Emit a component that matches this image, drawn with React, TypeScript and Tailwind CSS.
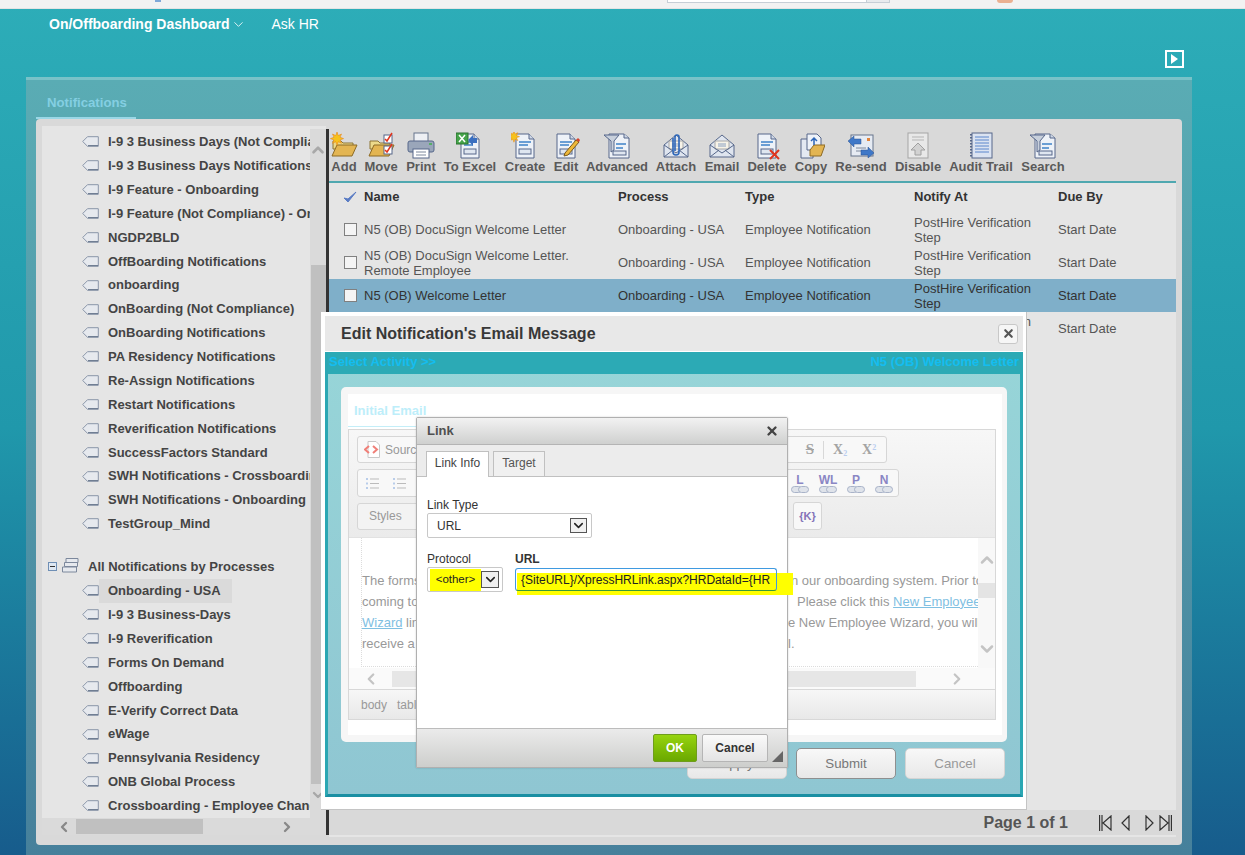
import { ReactNode } from "react";
import { ChevronDown, ChevronLeft, ChevronRight, ChevronUp, X } from "lucide-react";

const notifications = [
  "I-9 3 Business Days (Not Compliance) - Onboarding",
  "I-9 3 Business Days Notifications",
  "I-9 Feature - Onboarding",
  "I-9 Feature (Not Compliance) - Onboarding",
  "NGDP2BLD",
  "OffBoarding Notifications",
  "onboarding",
  "OnBoarding (Not Compliance)",
  "OnBoarding Notifications",
  "PA Residency Notifications",
  "Re-Assign Notifications",
  "Restart Notifications",
  "Reverification Notifications",
  "SuccessFactors Standard",
  "SWH Notifications - Crossboarding",
  "SWH Notifications - Onboarding",
  "TestGroup_Mind",
];

const processes = [
  "Onboarding - USA",
  "I-9 3 Business-Days",
  "I-9 Reverification",
  "Forms On Demand",
  "Offboarding",
  "E-Verify Correct Data",
  "eWage",
  "Pennsylvania Residency",
  "ONB Global Process",
  "Crossboarding - Employee Change",
];

const rows = [
  { name: ["N5 (OB) DocuSign Welcome Letter"], selected: false },
  { name: ["N5 (OB) DocuSign Welcome Letter.", "Remote Employee"], selected: false },
  { name: ["N5 (OB) Welcome Letter"], selected: true },
  { name: [""], selected: false },
];

const Tag = () => (
  <svg width="17" height="11" viewBox="0 0 17 11" className="shrink-0">
    <path d="M.7 5.500 5.500.7h10.800v9.600H5.500z" fill="#e6e9ee" stroke="#8a95a8" />
    <path d="M6 9.600h10" stroke="#66748c" />
  </svg>
);

const Star = () => (
  <path
    d="M7 0l1.300 3.600L11.500 2 10 5.300l3.600 1.300L10 8l1.500 3.300-3.200-1.600L7 13.200 5.700 9.700l-3.200 1.600L4 8 .4 6.600 4 5.300 2.500 2l3.200 1.600z"
    fill="#f6c21c"
    stroke="#e8871e"
    strokeWidth=".6"
  />
);

const Folder = () => (
  <>
    <path d="M3 9h8l2 2h10v6H3z" fill="#ecd98a" stroke="#8d7434" />
    <path d="M2 24 7 13h20l-5 11z" fill="#e3b552" stroke="#8d6a24" />
  </>
);

const Doc = ({ children }: { children?: ReactNode }) => (
  <>
    <path d="M5 2h13l5 5v19H5z" fill="#eef2f8" stroke="#56678a" />
    <path d="M18 2v5h5" fill="#cfd8e6" stroke="#56678a" />
    <path d="M8 10h12M8 13h9" stroke="#3f83c8" strokeWidth="1.300" />
    <rect x="8" y="17" width="12" height="5" fill="#dfe6f0" stroke="#56678a" />
    {children}
  </>
);

const Funnel = () => (
  <>
    <path d="M6 2h15l5 4v20H6z" fill="#eef2f8" stroke="#56678a" />
    <path d="M21 2v4h5" fill="#cfd8e6" stroke="#56678a" />
    <path d="M13 12h10M13 16h7" stroke="#3f83c8" strokeWidth="1.300" />
    <rect x="10" y="19" width="13" height="4" fill="#dfe6f0" stroke="#56678a" />
    <path d="M1 3h15l-5 6v9l-3 2V9z" fill="#c8d0dc" stroke="#56678a" />
  </>
);

const Envelope = ({ children }: { children?: ReactNode }) => (
  <>
    <path d="M2 13 14 3l12 10v12H2z" fill="#dfe5ef" stroke="#56678a" />
    <path d="M7 9h14v8H7z" fill="#f7f3e8" stroke="#a8a8a8" />
    <path d="M10 12h8M10 14h8" stroke="#8aa0c0" />
    <path d="m2 13 12 8 12-8M2 25l9-7M26 25l-9-7" fill="none" stroke="#56678a" />
    {children}
  </>
);

const icons: Record<string, ReactNode> = {
  Add: (
    <>
      <Folder />
      <Star />
    </>
  ),
  Move: (
    <>
      <Folder />
      <rect x="17" y="3" width="8" height="8" fill="#fff" stroke="#56678a" />
      <rect x="17" y="14" width="8" height="8" fill="#fff" stroke="#56678a" />
      <path d="m18 7 2 2 5-8M18 18l2 2 5-8" fill="none" stroke="#e0341e" strokeWidth="1.500" />
    </>
  ),
  Print: (
    <>
      <rect x="7" y="1" width="14" height="9" fill="#eef0f4" stroke="#66748c" />
      <rect x="1" y="9" width="26" height="11" rx="2" fill="#9aa6ba" stroke="#56678a" />
      <rect x="6" y="17" width="16" height="9" fill="#fff" stroke="#56678a" />
      <path d="M9 20h10M9 23h10" stroke="#7c889c" />
      <path d="M22 12h3" stroke="#3fb04a" strokeWidth="1.500" />
    </>
  ),
  "To Excel": (
    <>
      <Doc />
      <rect x="0" y="1" width="12" height="11" fill="#45a349" stroke="#2b7030" />
      <path d="m3 3 6 7M9 3l-6 7" stroke="#fff" strokeWidth="1.500" />
      <path d="m12 8 5-5v3h4v5h-4v3z" fill="#3a6fc0" />
    </>
  ),
  Create: (
    <Doc>
      <g transform="translate(-3 -1) scale(.85)">
        <Star />
      </g>
    </Doc>
  ),
  Edit: (
    <Doc>
      <path d="m13 21 11-13 3 2-11 13-4 1z" fill="#eeb83a" stroke="#7a5a1c" />
      <path d="m24 8 2-2 2 2-1 2z" fill="#d8402a" />
    </Doc>
  ),
  Advanced: <Funnel />,
  Attach: (
    <Envelope>
      <path d="M11 6v14a3 3 0 0 0 6 0V5a2 2 0 0 0-4 0v14" fill="none" stroke="#2d66b8" strokeWidth="1.600" />
    </Envelope>
  ),
  Email: <Envelope />,
  Delete: (
    <Doc>
      <path d="m17 18 9 9M26 18l-9 9" stroke="#e0341e" strokeWidth="2" />
    </Doc>
  ),
  Copy: (
    <>
      <path d="M4 7h12v19H4z" fill="#e4e9f2" stroke="#56678a" />
      <path d="M10 2h10l4 4v12H10z" fill="#eef2f8" stroke="#56678a" />
      <path d="M13 18 17 13h11l-4 11H13z" fill="#e3b552" stroke="#8d6a24" />
      <path d="M17 13V6m-3 3 3-3 3 3" fill="none" stroke="#2d66b8" strokeWidth="1.500" />
    </>
  ),
  "Re-send": (
    <>
      <rect x="4" y="3" width="22" height="21" fill="#e6ebf3" stroke="#66748c" />
      <path d="M9 16h10M9 19h8" stroke="#7c889c" />
      <rect x="20" y="6" width="3" height="3" fill="#e2843a" />
      <path d="M1 9 7 4v3h7v5H7v3z" fill="#3f78c8" stroke="#2a5290" strokeWidth=".5" />
      <path d="m27 21-6 5v-3h-7v-5h7v-3z" fill="#3f78c8" stroke="#2a5290" strokeWidth=".5" />
    </>
  ),
  Disable: (
    <>
      <rect x="4" y="1" width="20" height="25" fill="#e8e8e8" stroke="#a5a5a5" />
      <path d="M8 5h12M8 8h12" stroke="#b5b5b5" />
      <path d="M14 11l7 7h-4v5h-6v-5H7z" fill="#d2d2d2" stroke="#a0a0a0" />
    </>
  ),
  "Audit Trail": (
    <>
      <rect x="5" y="1" width="20" height="25" fill="#dbe3f1" stroke="#56678a" />
      <path d="M8 5h14M8 8h14M8 11h14M8 14h14M8 17h14M8 20h14" stroke="#5a86cc" />
      <path d="M4 2v23" stroke="#56678a" strokeWidth="2" strokeDasharray="1.500 1.500" />
    </>
  ),
  Search: <Funnel />,
};

const tools = [
  { label: "Add", w: "w-[30px]" },
  { label: "Move", w: "w-[44px]" },
  { label: "Print", w: "w-[36px]" },
  { label: "To Excel", w: "w-[62px]" },
  { label: "Create", w: "w-[48px]" },
  { label: "Edit", w: "w-[34px]" },
  { label: "Advanced", w: "w-[68px]" },
  { label: "Attach", w: "w-[50px]" },
  { label: "Email", w: "w-[42px]" },
  { label: "Delete", w: "w-[48px]" },
  { label: "Copy", w: "w-[40px]" },
  { label: "Re-send", w: "w-[60px]" },
  { label: "Disable", w: "w-[54px]" },
  { label: "Audit Trail", w: "w-[72px]" },
  { label: "Search", w: "w-[52px]" },
];

const SmallChevron = () => <ChevronDown size={15} strokeWidth={2.5} className="text-[#222]" />;

const Chain = () => (
  <svg width="18" height="7" viewBox="0 0 18 7">
    <rect x=".5" y=".5" width="10" height="6" rx="3" fill="#dfe3ea" stroke="#a9b3c8" />
    <rect x="7.500" y=".5" width="10" height="6" rx="3" fill="#dfe3ea" stroke="#a9b3c8" />
  </svg>
);

const LinkBtn = ({ label }: { label: string }) => (
  <div className="flex w-[28px] flex-col items-center">
    <span className="text-[12px] leading-[12px] font-bold text-[#8a86c4]">{label}</span>
    <Chain />
  </div>
);

const ListIcon = () => (
  <svg width="14" height="13" viewBox="0 0 14 13">
    <path d="M5 2h9M5 6.500h9M5 11h9" stroke="#bbb" />
    <path d="M1 1h2v2H1zM1 5.500h2v2H1zM1 10h2v2H1z" fill="#b9cdea" />
  </svg>
);

const EditorLine = ({ left, children }: { left: ReactNode; children: ReactNode }) => (
  <div className="flex h-[21px] items-center overflow-hidden whitespace-nowrap">
    <div className="w-[426px] shrink-0">{left}</div>
    {children}
  </div>
);

const EditDialog = () => (
  <div className="absolute top-[312px] left-[321px] h-[498px] w-[706px] border-r border-b border-[#c4c4c4] bg-white pt-[4px] pr-[3px] pl-[4px]">
    <div className="flex h-[35px] items-center justify-between bg-[#e8e8e8] pr-[5px] pl-[16px]">
      <span className="text-[16px] font-bold text-[#383838]">Edit Notification's Email Message</span>
      <div className="flex h-[20px] w-[20px] items-center justify-center rounded-[3px] border border-[#c8c8c8] bg-[#f6f6f6]">
        <X size={13} strokeWidth={4} className="text-[#555]" />
      </div>
    </div>
    <div className="mt-px h-[445px] border-x-[3px] border-b-[3px] border-x-[#2ba7b3] border-b-[#1a8fa3] bg-gradient-to-b from-[#97d5d8] to-[#8fc6d2]">
      <div className="flex h-[22px] items-start justify-between bg-[#2caab5] pr-[1px] pl-[1px] text-[13px] leading-[20px] font-bold text-[#14bdf0]">
        <span>Select Activity &gt;&gt;</span>
        <span>N5 (OB) Welcome Letter</span>
      </div>
      <div className="pt-[13px] pr-[13px] pl-[13px]">
        <div className="h-[355px] w-[666px] rounded-[5px] bg-[#f6f6f6] p-[7px]">
          <div className="h-[341px] w-[654px] bg-white">
            <div className="h-[35px] pt-[8px]">
              <div className="w-[90px] border-b border-[#c4eef8] pb-[7px] pl-[6px] text-[13px] leading-[17px] font-bold text-[#bdeefa]">
                <span className="whitespace-nowrap">Initial Email</span>
              </div>
            </div>
            <div className="h-[291px] w-[648px] border border-[#d8d8d8] text-[#999]">
              <div className="h-[107px] bg-gradient-to-b from-[#f7f7f7] to-[#ebebeb] pt-[6px] pl-[8px]">
                <div className="flex h-[27px] w-[530px] items-center justify-between rounded-[3px] border border-[#d6d6d6] bg-[#f8f8f8] pr-[8px] pl-[6px]">
                  <div className="flex items-center gap-[5px]">
                    <svg width="16" height="17" viewBox="0 0 16 17">
                      <path d="M4 .5h8l3.500 3.500v12.500H4z" fill="#fff" stroke="#c8c8c8" />
                      <path d="m5 5-4 3.500L5 12M9 5l4 3.500L9 12" fill="none" stroke="#f07f78" strokeWidth="2" />
                    </svg>
                    <span className="text-[12px]">Source</span>
                  </div>
                  <div className="flex items-center text-[#a4a4a4]">
                    <span className="font-['Liberation_Serif',serif] text-[15px] font-bold line-through">S</span>
                    <span className="ml-[9px] h-[18px] w-px bg-[#d8d8d8]" />
                    <span className="ml-[9px] w-[29px] font-['Liberation_Serif',serif] text-[14px] font-bold">
                      X<sub className="text-[8px] text-[#b8cdf0]">2</sub>
                    </span>
                    <span className="w-[16px] font-['Liberation_Serif',serif] text-[14px] font-bold">
                      X<sup className="text-[8px] text-[#b8cdf0]">2</sup>
                    </span>
                  </div>
                </div>
                <div className="mt-[6px] flex h-[28px] w-[542px] items-center justify-between rounded-[3px] border border-[#d6d6d6] bg-[#f8f8f8] pl-[7px]">
                  <div className="flex gap-[13px]">
                    <ListIcon />
                    <ListIcon />
                  </div>
                  <div className="flex">
                    <LinkBtn label="L" />
                    <LinkBtn label="WL" />
                    <LinkBtn label="P" />
                    <LinkBtn label="N" />
                  </div>
                </div>
                <div className="mt-[5px] flex w-[465px] items-center justify-between">
                  <div className="flex h-[27px] w-[90px] items-center rounded-[3px] border border-[#d6d6d6] bg-[#f3f3f3] pl-[11px] text-[12px]">
                    Styles
                  </div>
                  <div className="flex h-[28px] w-[29px] items-center justify-center rounded-[3px] border border-[#d6d6d6] bg-[#f8f8f8] text-[11px] font-bold text-[#8573b8]">
                    {"{K}"}
                  </div>
                </div>
              </div>
              <div className="flex h-[131px] border-t border-[#e2e2e2]">
                <div className="w-[629px] pl-[12px]">
                  <div className="h-[129px] border-b border-l border-dotted border-[#dcdcdc] pt-[32px] text-[13px]">
                    <EditorLine left="The forms">in our onboarding system. Prior to</EditorLine>
                    <EditorLine left="coming to">
                      <span className="ml-[9px]">
                        Please click this <span className="text-[#7fc0e2] underline">New Employee</span>
                      </span>
                    </EditorLine>
                    <EditorLine
                      left={
                        <>
                          <span className="text-[#7fc0e2] underline">Wizard</span> lin
                        </>
                      }
                    >
                      e New Employee Wizard, you will
                    </EditorLine>
                    <EditorLine left="receive a">l.</EditorLine>
                  </div>
                </div>
                <div className="flex w-[17px] flex-col items-center bg-[#f8f8f8] pt-[12px]">
                  <ChevronUp size={20} strokeWidth={3} className="text-[#c4c4c4]" />
                  <div className="mt-[13px] h-[15px] w-[17px] shrink-0 bg-[#e4e4e4]" />
                  <ChevronDown size={20} strokeWidth={3} className="mt-[41px] text-[#c4c4c4]" />
                </div>
              </div>
              <div className="flex h-[21px] items-center bg-[#fafafa] pl-[13px]">
                <ChevronLeft size={18} strokeWidth={3} className="text-[#c4c4c4]" />
                <div className="ml-[12px] h-[16px] w-[524px] bg-[#e6e6e6]" />
                <ChevronRight size={18} strokeWidth={3} className="ml-[32px] text-[#c4c4c4]" />
              </div>
              <div className="flex h-[30px] items-center gap-[10px] border-t border-[#d8d8d8] bg-gradient-to-b from-[#f7f7f7] to-[#e8e8e8] pl-[12px] text-[12px]">
                <span>body</span>
                <span>table</span>
              </div>
            </div>
          </div>
        </div>
        <div className="mt-[6px] flex w-[664px] justify-end gap-[9px] text-[13.300px]">
          <div className="flex h-[31px] w-[100px] items-center justify-center rounded-[5px] border border-[#d4d4d4] bg-gradient-to-b from-[#f8f8f8] to-[#e8e8e8] text-[#777]">
            Apply
          </div>
          <div className="flex h-[31px] w-[100px] items-center justify-center rounded-[5px] border border-[#8f8f8f] bg-gradient-to-b from-[#f8f8f8] to-[#e8e8e8] text-[#777]">
            Submit
          </div>
          <div className="flex h-[31px] w-[100px] items-center justify-center rounded-[5px] border border-[#d4d4d4] bg-gradient-to-b from-[#f8f8f8] to-[#e8e8e8] text-[#999]">
            Cancel
          </div>
        </div>
      </div>
    </div>
  </div>
);

const LinkDialog = () => (
  <div className="absolute top-[417px] left-[416px] h-[351px] w-[372px] rounded-t-[2px] border border-[#b0b0b0] bg-white text-[12px] text-[#222] shadow-[0_0_2px_rgba(0,0,0,0.2)]">
    <div className="flex h-[27px] items-center justify-between border-b border-[#b4b4b4] bg-gradient-to-b from-[#f2f2f2] to-[#cfd0cf] pr-[8px] pl-[10px]">
      <span className="text-[13px] font-bold text-[#505050]">Link</span>
      <X size={14} strokeWidth={4} className="text-[#444]" />
    </div>
    <div className="flex h-[32px] items-end gap-[4px] border-b border-[#c0c0c0] bg-[#ececec] pl-[9px]">
      <div className="relative -mb-px flex h-[26px] w-[63px] items-center justify-center border border-b-0 border-[#c0c0c0] bg-white pb-[3px] text-[#444]">
        Link Info
      </div>
      <div className="flex h-[25px] w-[52px] items-center justify-center border border-b-0 border-[#c0c0c0] bg-[#f0f0f0] pb-[2px] text-[#555]">
        Target
      </div>
    </div>
    <div className="relative h-[251px] pt-[21px] pl-[10px]">
      <div className="h-[14px] leading-[14px] text-[#333]">Link Type</div>
      <div className="mt-[1px] flex h-[25px] w-[165px] items-center justify-between rounded-[2px] border border-[#c8c8c8] pr-[4px] pl-[9px] text-[#333]">
        URL
        <div className="flex h-[15px] w-[17px] items-center justify-center border border-[#555] bg-[#f0f0f0]">
          <SmallChevron />
        </div>
      </div>
      <div className="mt-[14px] flex">
        <div className="w-[88px]">
          <div className="h-[14px] leading-[14px] text-[#333]">Protocol</div>
          <div className="mt-[1px] flex h-[25px] w-[76px] items-center rounded-[2px] border border-[#c8c8c8] pl-[2px]">
            <div className="flex h-[22px] w-[51px] items-center justify-center bg-[#ffff00] text-[11.500px]">&lt;other&gt;</div>
            <div className="flex h-[17px] w-[18px] items-center justify-center border border-[#555] bg-[#f0f0f0]">
              <SmallChevron />
            </div>
          </div>
        </div>
        <div className="relative">
          <div className="h-[14px] leading-[14px] font-bold text-[#333]">URL</div>
          <div className="absolute top-[21px] left-[2px] h-[22px] w-[276px] bg-[#ffff00]" />
          <div className="relative mt-[2px] flex h-[23px] w-[262px] items-center rounded-[3px] border border-[#3f9ae0] border-b-[#3a9a3a] pl-[5px] whitespace-nowrap">
            {"{SiteURL}/XpressHRLink.aspx?HRDataId={HR"}
          </div>
        </div>
      </div>
    </div>
    <div className="flex h-[39px] items-center justify-end border-t border-[#bcbcbc] bg-gradient-to-b from-[#ebebeb] to-[#cdcecc] pr-[19px]">
      <div className="flex h-[28px] w-[44px] items-center justify-center rounded-[2px] border border-[#6f9d1c] bg-gradient-to-b from-[#96d40f] to-[#6aa800] font-bold text-white">
        OK
      </div>
      <div className="ml-[5px] flex h-[28px] w-[66px] items-center justify-center rounded-[2px] border border-[#b5b5b5] bg-gradient-to-b from-[#fafafa] to-[#e4e4e4] font-bold text-[#333]">
        Cancel
      </div>
    </div>
    <div className="absolute right-[4px] bottom-[5px] h-0 w-0 border-b-[11px] border-l-[11px] border-b-[#666] border-l-transparent" />
  </div>
);

export default function App() {
  return (
    <div className="relative h-[855px] w-[1245px] overflow-hidden bg-gradient-to-b from-[#2dadb8] via-[#2098ab] to-[#175c8c] font-['Liberation_Sans',Arial,sans-serif]">
      <div className="flex h-[9px] items-start border-b border-[#e4e4e4] bg-[#f2f2f2]">
        <div className="ml-[155px] h-[2px] w-[6px] bg-[#7fa8d8]" />
        <div className="ml-[506px] flex h-[3px] w-[223px]">
          <div className="w-[200px] border-x border-b border-[#c6ced6] bg-white" />
          <div className="w-[23px] border-r border-b border-[#c6ced6] bg-[#e8ebee]" />
        </div>
        <div className="ml-[107px] h-[3px] w-[16px] rounded-b-full bg-[#eab091]" />
      </div>
      <div className="flex h-[68px] items-start pt-[6px] pl-[49px] text-white">
        <div className="flex h-[18px] items-center gap-[2px] text-[14px] font-bold">
          On/Offboarding Dashboard
          <ChevronDown size={15} strokeWidth={1.3} />
        </div>
        <div className="ml-[25px] h-[18px] text-[14px] leading-[18px]">Ask HR</div>
        <div className="mt-[35px] ml-[846px] flex h-[18px] w-[19px] items-center justify-center border-2 border-white">
          <div className="ml-[1px] h-0 w-0 border-y-[5px] border-l-[7px] border-y-transparent border-l-white" />
        </div>
      </div>
      <div className="ml-[26px] h-[779px] w-[1166px] border-t-[3px] border-[#79c2c8] bg-gradient-to-b from-[#5aacb4] to-[#46809b]">
        <div className="h-[39px] pl-[10px]">
          <div className="h-[39px] w-[100px] border-b-2 border-[#9ad7e6] pt-[15px] pl-[11px] text-[13.200px] leading-[16px] font-bold whitespace-nowrap text-[#84cfe2]">
            Notifications
          </div>
        </div>
        <div className="ml-[10px] h-[726px] w-[1146px] rounded-[4px] bg-[#d9d9d9] pt-[7px] pl-[6px]">
          <div className="flex h-[702px]">
            <div className="w-[284px] shrink-0">
              <div className="flex h-[692px] bg-[#e5e5e5]">
                <div className="w-[268px] overflow-hidden pt-[4px] text-[13px] font-bold whitespace-nowrap text-[#444]">
                  {notifications.map((n) => (
                    <div key={n} className="flex h-[23.875px] items-center gap-[9px] pl-[40px]">
                      <Tag />
                      <span>{n}</span>
                    </div>
                  ))}
                  <div className="mt-[19px] flex h-[24px] items-center pl-[6px]">
                    <div className="flex h-[9px] w-[9px] items-center justify-center border border-[#6f8fb5] bg-[#dfe8f2]">
                      <div className="h-px w-[5px] bg-[#333]" />
                    </div>
                    <svg width="17" height="15" viewBox="0 0 17 15" className="ml-[5px] -translate-y-[1px]">
                      <path d="M4 .5h12v4H4zM2.500 4.500h13v4h-13zM.5 9h14v5H.5z" fill="#e6e9ee" stroke="#7c889c" />
                    </svg>
                    <span className="ml-[9px]">All Notifications by Processes</span>
                  </div>
                  {processes.map((p, i) => (
                    <div key={p} className="flex h-[23.900px] items-center pl-[40px]">
                      <Tag />
                      <span className={i === 0 ? "flex h-[24px] w-[133px] items-center bg-[#dadada] pl-[9px]" : "pl-[9px]"}>{p}</span>
                    </div>
                  ))}
                </div>
                <div className="mt-[3px] flex h-[689px] w-[16px] flex-col items-center bg-[#dadada] pt-[12px]">
                  <ChevronUp size={18} strokeWidth={3.5} className="text-[#a8a8a8]" />
                  <div className="mt-[106px] h-[519px] w-[15px] bg-[#c0c0c0]" />
                  <ChevronDown size={16} strokeWidth={3.5} className="mt-[3px] text-[#a8a8a8]" />
                </div>
              </div>
              <div className="flex h-[17px] items-center bg-[#dadada] pl-[14px]">
                <ChevronLeft size={16} strokeWidth={3.5} className="text-[#888]" />
                <div className="ml-[4px] h-[15px] w-[127px] bg-[#c0c0c0]" />
                <ChevronRight size={16} strokeWidth={3.5} className="ml-[76px] text-[#888]" />
              </div>
            </div>
            <div className="mt-[3px] h-[706px] w-[3px] shrink-0 bg-[#333]" />
            <div className="mt-[3px] w-[847px] shrink-0">
              <div className="flex h-[52px] items-start bg-[#d9d9d9] pt-[3px]">
                {tools.map((t) => (
                  <div key={t.label} className={`flex shrink-0 flex-col items-center whitespace-nowrap ${t.w}`}>
                    <svg width="28" height="28" viewBox="0 0 28 28">
                      {icons[t.label]}
                    </svg>
                    <span className="mt-[-1px] text-[13px] leading-[16px] font-bold text-[#5a5a5a]">{t.label}</span>
                  </div>
                ))}
              </div>
              <div className="h-[2px] bg-[#4fa8b0]" />
              <div className="h-[627px] bg-[#e5e5e5] text-[13px] text-[#555]">
                <div className="grid h-[30px] grid-cols-[35px_254px_127px_169px_144px_1fr] items-center pb-[2px] font-bold text-[#333]">
                  <svg width="14" height="12" viewBox="0 0 14 12" className="ml-[14px]">
                    <path d="m1 7 4 4 8-10-8 7z" fill="#5a7cc4" stroke="#5a7cc4" />
                  </svg>
                  <div>Name</div>
                  <div>Process</div>
                  <div>Type</div>
                  <div>Notify At</div>
                  <div>Due By</div>
                </div>
                {rows.map((r, i) => (
                  <div
                    key={i}
                    className={`grid h-[33px] grid-cols-[35px_254px_127px_169px_144px_1fr] items-center leading-[15px] ${r.selected ? "bg-[#7fafc9] text-[#333]" : ""}`}
                  >
                    <div className="ml-[15px] h-[13px] w-[13px] border border-[#808080] bg-[#f4f4f4]" />
                    <div>
                      {r.name.map((l) => (
                        <div key={l}>{l}</div>
                      ))}
                    </div>
                    <div>Onboarding - USA</div>
                    <div>Employee Notification</div>
                    <div>
                      PostHire Verification
                      <br />
                      Step
                    </div>
                    <div>Start Date</div>
                  </div>
                ))}
              </div>
              <div className="flex h-[25px] items-center justify-end bg-[#d9d9d9] pr-[4px]">
                <span className="text-[16px] font-bold text-[#555]">Page 1 of 1</span>
                <svg width="73" height="16" viewBox="0 0 73 16" className="ml-[31px]" fill="none" stroke="#333" strokeWidth="1.200">
                  <path d="M.6 0v16M3 0v16M12 1 4 8l8 7zM30 1l-7 7 7 7zM47 1l7 7-7 7zM61 1l8 7-8 7zM70 0v16M72.400 0v16" />
                </svg>
              </div>
              <div className="h-[2px] bg-[#e5e5e5]" />
            </div>
          </div>
        </div>
      </div>
      <EditDialog />
      <LinkDialog />
    </div>
  );
}
